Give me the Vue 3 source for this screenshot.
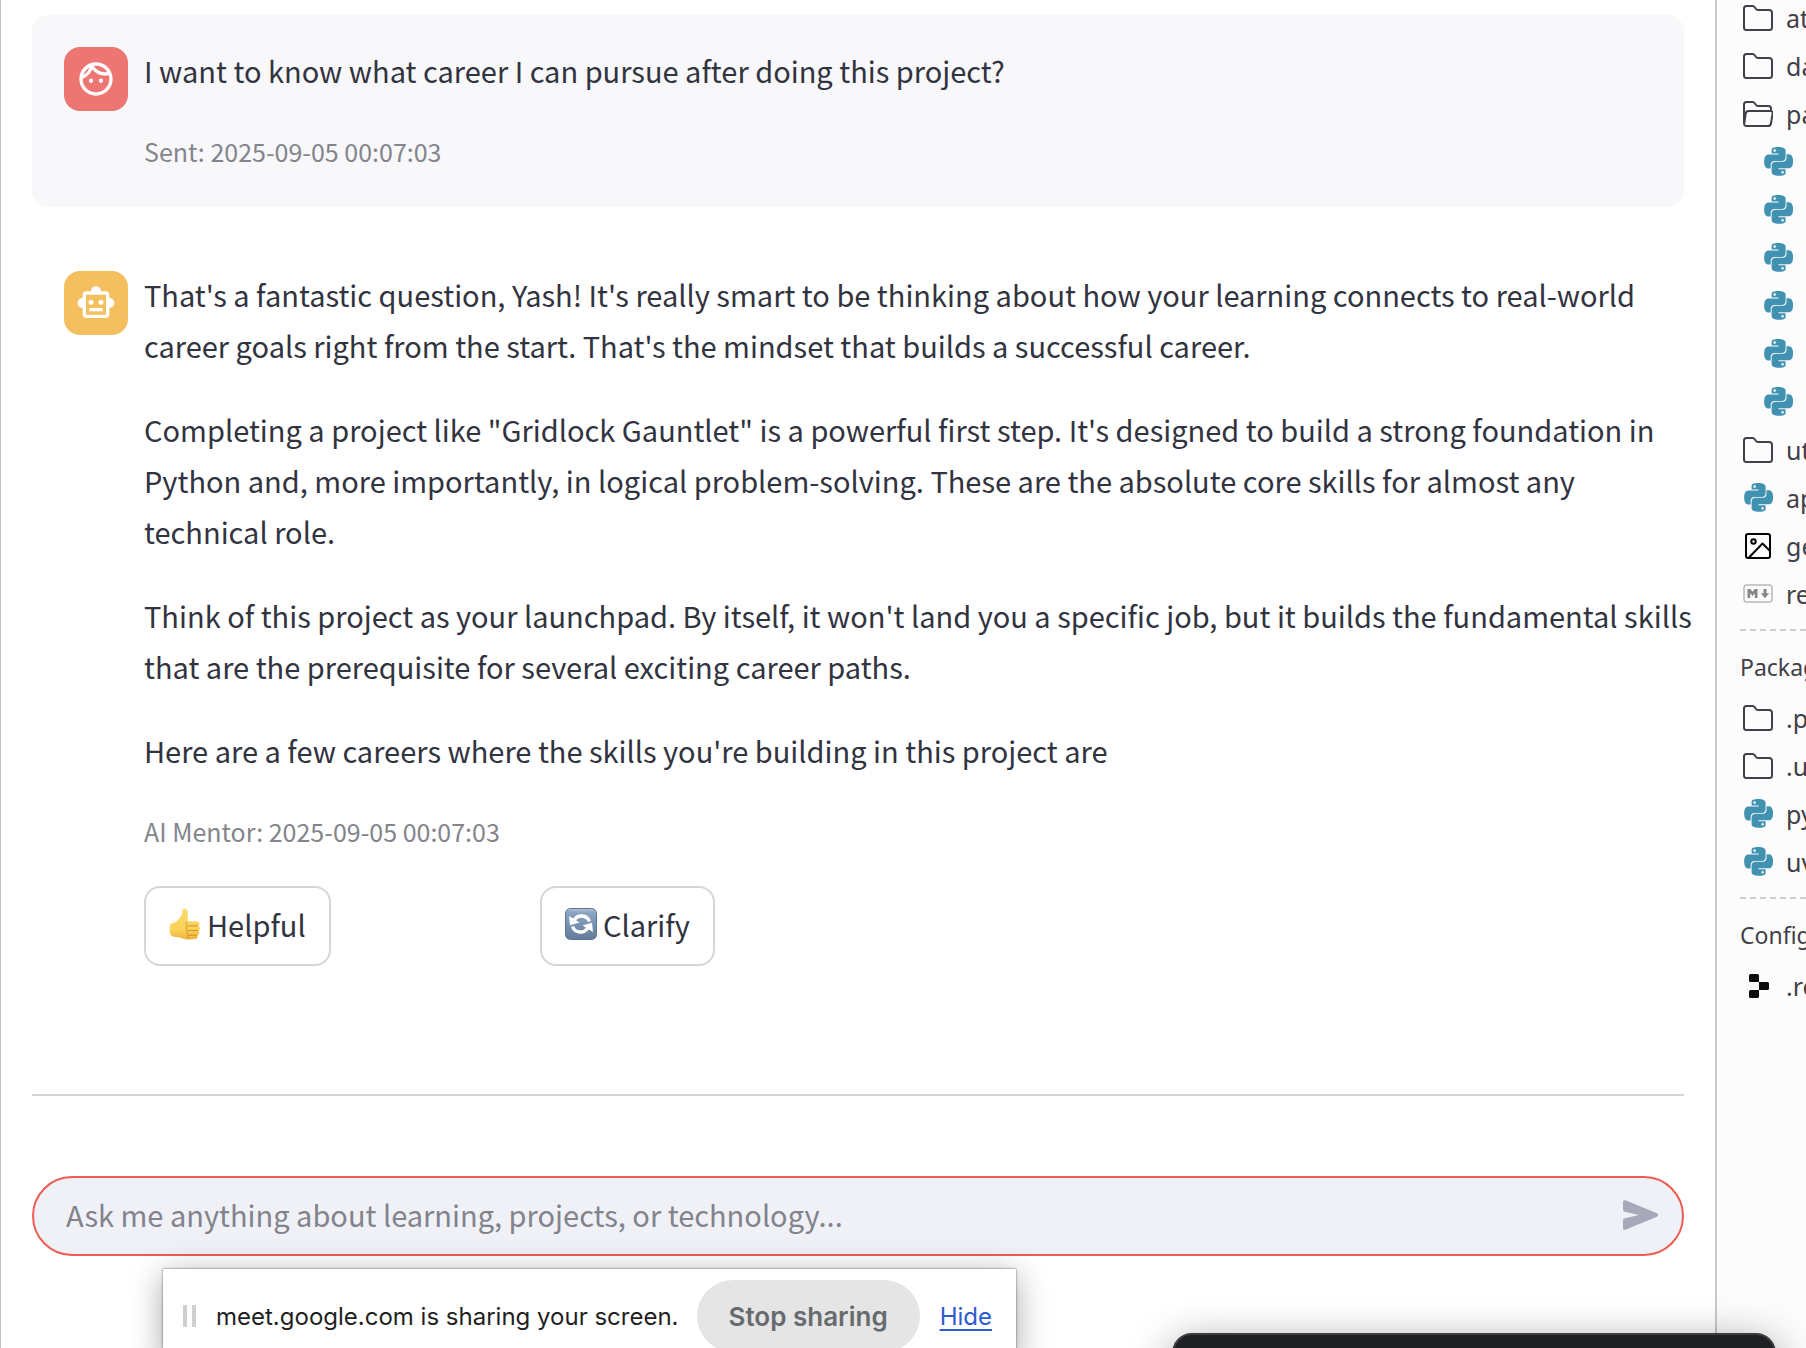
<script setup>
const paragraphs = [
  "That's a fantastic question, Yash! It's really smart to be thinking about how your learning connects to real-world career goals right from the start. That's the mindset that builds a successful career.",
  "Completing a project like \"Gridlock Gauntlet\" is a powerful first step. It's designed to build a strong foundation in Python and, more importantly, in logical problem-solving. These are the absolute core skills for almost any technical role.",
  "Think of this project as your launchpad. By itself, it won't land you a specific job, but it builds the fundamental skills that are the prerequisite for several exciting career paths.",
  "Here are a few careers where the skills you're building in this project are",
]

const groups = [
  {
    title: '',
    rows: [
      { icon: 'folder', label: 'at' },
      { icon: 'folder', label: 'da' },
      { icon: 'open', label: 'pa' },
      { icon: 'python', nested: true },
      { icon: 'python', nested: true },
      { icon: 'python', nested: true },
      { icon: 'python', nested: true },
      { icon: 'python', nested: true },
      { icon: 'python', nested: true },
      { icon: 'folder', label: 'ut' },
      { icon: 'python', label: 'ap' },
      { icon: 'image', label: 'ge' },
      { icon: 'markdown', label: 're' },
    ],
  },
  {
    title: 'Packag',
    rows: [
      { icon: 'folder', label: '.p' },
      { icon: 'folder', label: '.u' },
      { icon: 'python', label: 'py' },
      { icon: 'python', label: 'uv' },
    ],
  },
  { title: 'Config', rows: [{ icon: 'replit', label: '.re' }] },
]
</script>

<template>
  <div class="page">
    <main class="chat">
      <article class="message user">
        <div class="avatar red">
          <svg viewBox="0 0 24 24" aria-hidden="true"><path d="M10.25 13c0 .69-.56 1.25-1.25 1.25S7.75 13.69 7.75 13s.56-1.25 1.25-1.25 1.25.56 1.25 1.25zM15 11.75c-.69 0-1.25.56-1.25 1.25s.56 1.25 1.25 1.25 1.25-.56 1.25-1.25-.56-1.25-1.25-1.25zm7 .25c0 5.52-4.48 10-10 10S2 17.52 2 12 6.48 2 12 2s10 4.48 10 10zM10.66 4.12C12.06 6.44 14.6 8 17.5 8c.46 0 .91-.05 1.34-.12C17.44 5.56 14.9 4 12 4c-.46 0-.91.05-1.34.12zM4.42 9.47c1.71-.97 3.03-2.55 3.66-4.44C6.37 6 5.05 7.58 4.42 9.47zM20 12c0-.78-.12-1.53-.33-2.24-.7.15-1.42.24-2.17.24-3.13 0-5.92-1.44-7.76-3.69C8.69 8.87 6.6 10.88 4 11.86c.01.04 0 .09 0 .14 0 4.42 3.58 8 8 8s8-3.58 8-8z"/></svg>
        </div>
        <div class="body">
          <p>I want to know what career I can pursue after doing this project?</p>
          <p class="caption">Sent: 2025-09-05 00:07:03</p>
        </div>
      </article>

      <article class="message">
        <div class="avatar amber">
          <svg viewBox="0 0 24 24" aria-hidden="true"><path d="M20 9V7c0-1.1-.9-2-2-2h-3c0-1.66-1.34-3-3-3S9 3.34 9 5H6c-1.1 0-2 .9-2 2v2c-1.66 0-3 1.34-3 3s1.34 3 3 3v4c0 1.1.9 2 2 2h12c1.1 0 2-.9 2-2v-4c1.66 0 3-1.34 3-3s-1.34-3-3-3zm-2 10H6V7h12v12zm-9-6c-.83 0-1.5-.67-1.5-1.5S8.17 10 9 10s1.5.67 1.5 1.5S9.83 13 9 13zm7.5-1.5c0 .83-.67 1.5-1.5 1.5s-1.5-.67-1.5-1.5.67-1.5 1.5-1.5 1.5.67 1.5 1.5zM8 15h8v2H8v-2z"/></svg>
        </div>
        <div class="body">
          <p v-for="text in paragraphs" :key="text">{{ text }}</p>
          <p class="caption">AI Mentor: 2025-09-05 00:07:03</p>
          <div class="actions">
            <button type="button" class="action">
              <svg viewBox="0 0 32 32" aria-hidden="true">
                <defs>
                  <linearGradient id="thumb" x1="0" y1="0" x2="0" y2="1">
                    <stop offset="0" stop-color="#fbdb70" /><stop offset="0.7" stop-color="#fbd056" /><stop offset="1" stop-color="#eeb23c" />
                  </linearGradient>
                </defs>
                <path fill="url(#thumb)" d="M14 1.200C15.500-.2 18 .8 18.600 3.200C19.300 6.400 18.700 10 18.300 13.200H27.500C30.600 13.400 31.300 16.800 29.400 18C31.600 19 31.400 22 29.400 22.800C30.900 24 30.300 26.600 28.500 27.200C29.300 29 28.200 30.800 26 31.100C22.500 31.600 18.500 31.700 15.500 31C13 30.400 11.500 29.600 9 29.200C6.300 28.900 3.500 29 2 27.500C.3 24.600.2 19 1.500 16.400C2.600 14.900 5.800 14.800 7.600 13.200C10 11 12.400 8.400 13.200 5.600C13.600 4.100 13.100 2.100 14 1.200z" />
                <path fill="none" stroke="#cf9027" stroke-width="1" stroke-linecap="round" d="M20 17.800H28.500M19.500 22.600H28.500M20 27.200H27.500M18.300 13.400C16.400 14.400 16.600 17 18.500 17.800C16.700 18.800 16.900 21.600 18.800 22.400C17.300 23.600 17.500 26.200 19.500 27C18.500 28.400 19 30 20.200 30.800" />
              </svg>
              <span>Helpful</span>
            </button>
            <button type="button" class="action">
              <svg viewBox="0 0 32 32" aria-hidden="true">
                <defs>
                  <linearGradient id="tile" x1="0" y1="0" x2="0" y2="1">
                    <stop offset="0" stop-color="#b3c6da" /><stop offset="0.12" stop-color="#8ba5c3" /><stop offset="1" stop-color="#627b98" />
                  </linearGradient>
                </defs>
                <rect x="0.500" y="0.500" width="31" height="31" rx="5" fill="url(#tile)" stroke="#5d7690" />
                <g fill="none" stroke="#fff" stroke-width="3.400">
                  <path d="M9 12.500A8.500 8.500 0 0 1 24.500 13.500" />
                  <path d="M23 19.500A8.500 8.500 0 0 1 7.500 18.500" />
                </g>
                <path fill="#fff" d="M4 8 5 17.200 14.500 14.600zM28 24 27 14.800 17.500 17.400z" />
              </svg>
              <span>Clarify</span>
            </button>
          </div>
        </div>
      </article>

      <hr />

      <form class="composer" @submit.prevent>
        <input type="text" aria-label="Message" placeholder="Ask me anything about learning, projects, or technology..." />
        <button type="submit" aria-label="Send">
          <svg viewBox="0 0 36 30" aria-hidden="true"><path d="M2.400.3 34 13.200q2.200 1.800 0 3.600L2.400 29.700Q0 30.300 0 28.200V20.500Q0 18.800 1.800 18.300L16 15 1.800 11.700Q0 11.200 0 9.500V1.800Q0-.3 2.400.3z" /></svg>
        </button>
      </form>
    </main>

    <aside class="files">
      <section v-for="group in groups" :key="group.title" class="group">
        <h2 v-if="group.title">{{ group.title }}</h2>
        <ul>
          <li v-for="(row, i) in group.rows" :key="i" :class="{ nested: row.nested }">
            <svg v-if="row.icon === 'folder'" class="line" viewBox="0 0 30 30" aria-hidden="true"><path d="M1 5.500Q1 3 3.500 3H9.500Q11 3 11.800 4.200L13 6Q13.600 7 15 7H26Q29 7 29 10V24.500Q29 27 26.500 27H3.500Q1 27 1 24.500z" /></svg>
            <svg v-else-if="row.icon === 'open'" class="line" viewBox="0 0 30 30" aria-hidden="true"><path d="M1 24.500V5.500Q1 3 3.500 3H9.500Q11 3 11.800 4.200L13 6Q13.600 7 15 7H25.500Q28 7 28 9.500V12M5.500 12H27.500Q30 12 29.600 14.500L28 24.500Q27.600 27 25 27H3.500Q1 27 1.300 24.500L2.700 14.500Q3 12 5.500 12z" /></svg>
            <svg v-else-if="row.icon === 'python'" class="python" viewBox="-1 0 25 25" aria-hidden="true"><path d="M14.25.18l.9.2.73.26.59.3.45.32.34.34.25.34.16.33.1.3.04.26.02.2-.01.13V8.5l-.05.63-.13.55-.21.46-.26.38-.3.31-.33.25-.35.19-.35.14-.33.1-.3.07-.26.04-.21.02H8.77l-.69.05-.59.14-.5.22-.41.27-.33.32-.27.35-.2.36-.15.37-.1.35-.07.32-.04.27-.02.21v3.06H3.17l-.21-.03-.28-.07-.32-.12-.35-.18-.36-.26-.36-.36-.35-.46-.32-.59-.28-.73-.21-.88-.14-1.05-.05-1.23.06-1.22.16-1.04.24-.87.32-.71.36-.57.4-.44.42-.33.42-.24.4-.16.36-.1.32-.05.24-.01h.16l.06.01h8.16v-.83H6.18l-.01-2.75-.02-.37.05-.34.11-.31.17-.28.25-.26.31-.23.38-.2.44-.18.51-.15.58-.12.64-.1.71-.06.77-.04.84-.02 1.27.05zm-6.3 1.98l-.23.33-.08.41.08.41.23.34.33.22.41.09.41-.09.33-.22.23-.34.08-.41-.08-.41-.23-.33-.33-.22-.41-.09-.41.09zm13.09 3.95l.28.06.32.12.35.18.36.27.36.35.35.47.32.59.28.73.21.88.14 1.04.05 1.23-.06 1.23-.16 1.04-.24.86-.32.71-.36.57-.4.45-.42.33-.42.24-.4.16-.36.09-.32.05-.24.02-.16-.01h-8.22v.82h5.84l.01 2.76.02.36-.05.34-.11.31-.17.29-.25.25-.31.24-.38.2-.44.17-.51.15-.58.13-.64.09-.71.07-.77.04-.84.01-1.27-.04-1.07-.14-.9-.2-.73-.25-.59-.3-.45-.33-.34-.34-.25-.34-.16-.33-.1-.3-.04-.25-.02-.2.01-.13v-5.34l.05-.64.13-.54.21-.46.26-.38.3-.32.33-.24.35-.2.35-.14.33-.1.3-.06.26-.04.21-.02.13-.01h5.84l.69-.05.59-.14.5-.21.41-.28.33-.32.27-.35.2-.36.15-.36.1-.35.07-.32.04-.28.02-.21V6.07h2.09l.14.01zm-6.47 14.25l-.23.33-.08.41.08.41.23.33.33.23.41.08.41-.08.33-.23.23-.33.08-.41-.08-.41-.23-.33-.33-.23-.41-.08-.41.08z" /></svg>
            <svg v-else-if="row.icon === 'image'" class="line dark" viewBox="0 0 30 30" aria-hidden="true"><rect x="3" y="3" width="24" height="24" rx="2" /><circle cx="10.500" cy="10.500" r="2.200" /><path d="M6 26.500 19.500 12.500 27 20" /></svg>
            <svg v-else-if="row.icon === 'markdown'" class="markdown" viewBox="0 0 30 30" aria-hidden="true"><rect x="1" y="6" width="28" height="17" rx="2" /><path d="M4.500 19V10H7.200L9.500 12.800 11.800 10H14.500V19H11.800V14.200L9.500 17 7.200 14.200V19zM20.500 10H23.500V14.200H26.200L22 19.200 17.800 14.200H20.500z" /></svg>
            <svg v-else viewBox="0 0 30 30" aria-hidden="true"><path d="M7.500 3H14.500Q16 3 16 4.500V11H7.500Q6 11 6 9.500V4.500Q6 3 7.500 3zM16 11H24.500Q26 11 26 12.500V17.500Q26 19 24.500 19H16zM7.500 19H16V25.500Q16 27 14.500 27H7.500Q6 27 6 25.500V20.500Q6 19 7.500 19z" /></svg>
            <span v-if="row.label">{{ row.label }}</span>
          </li>
        </ul>
      </section>
    </aside>

    <div class="share">
      <span class="grip" aria-hidden="true"></span>
      <span class="notice">meet.google.com is sharing your screen.</span>
      <button type="button">Stop sharing</button>
      <a href="#">Hide</a>
    </div>
    <div class="dock"></div>
  </div>
</template>

<style>
body {
  margin: 0;
}
</style>

<style scoped>
.page {
  position: relative;
  display: flex;
  min-height: 100vh;
  overflow: hidden;
  background: #fff;
  color: #31333f;
  font-family: "Noto Sans CJK SC", sans-serif;
  font-size: 29px;
  line-height: 51px;
}
.page * {
  box-sizing: border-box;
}
.chat {
  flex: 1;
  min-width: 0;
  padding: 15px 31px 0;
  border-left: 1px solid #c4c4c6;
}
.message {
  display: flex;
  gap: 16px;
  padding: 30px 0 34px 32px;
  border-radius: 16px;
}
.message + .message {
  margin-top: 32px;
}
.user {
  background: #f8f8fb;
}
.avatar {
  display: flex;
  flex: none;
  align-items: center;
  justify-content: center;
  width: 64px;
  height: 64px;
  margin-top: 2px;
  border-radius: 16px;
}
.avatar svg {
  width: 40px;
  height: 40px;
  fill: #fff;
}
.red {
  background: #ed7572;
}
.amber {
  background: #f4bf5e;
}
.body {
  flex: 1;
  min-width: 0;
  margin-right: -16px;
}
.body p {
  margin: 0 0 33px;
}
.body .caption {
  margin: 0;
  color: #83848c;
  font-size: 25px;
  line-height: 44px;
}
.actions {
  display: grid;
  grid-template-columns: repeat(4, 1fr);
  gap: 28px;
  justify-items: start;
  margin-top: 33px;
}
.action {
  display: flex;
  align-items: center;
  gap: 6px;
  height: 80px;
  padding: 0 23px 4px;
  border: 2px solid #d6d6d9;
  border-radius: 16px;
  background: #fff;
  color: inherit;
  font: inherit;
}
.action svg {
  width: 32px;
  height: 32px;
}
hr {
  height: 2px;
  margin: 94px 0 80px;
  border: 0;
  background: #d6d6d9;
}
.composer {
  display: flex;
  align-items: center;
  height: 80px;
  padding: 0 23px 2px 32px;
  border: 2px solid #ef5b54;
  border-radius: 40px;
  background: #f0f1f6;
}
.composer input {
  flex: 1;
  min-width: 0;
  height: 56px;
  padding: 0 0 2px;
  border: 0;
  outline: 0;
  background: none;
  color: inherit;
  font: inherit;
}
.composer input::placeholder {
  color: #82838c;
  opacity: 1;
}
.composer button {
  display: flex;
  padding: 0;
  border: 0;
  background: none;
}
.composer svg {
  width: 36px;
  height: 30px;
  fill: #a5a9b9;
}
.files {
  flex: none;
  width: 91px;
  padding: 0 0 0 23px;
  overflow: hidden;
  border-left: 2px solid #c9c9cc;
  background: #fcfcfc;
  color: #3f4048;
  font-family: "Noto Sans", sans-serif;
  font-size: 25px;
  line-height: 48px;
  white-space: nowrap;
}
.files ul {
  margin: 0;
  padding: 0;
  list-style: none;
}
.group:first-child ul {
  margin-top: -6px;
}
.group + .group::before {
  content: "";
  display: block;
  height: 2px;
  margin: 11px 0 12px;
  background: repeating-linear-gradient(90deg, #cfcfd1 0 6px, transparent 6px 10px);
}
.files h2 {
  margin: 0 0 3px;
  font-size: 23px;
  font-weight: 400;
  line-height: 48px;
}
.files li {
  display: flex;
  align-items: center;
  gap: 13px;
  height: 48px;
  padding-left: 3px;
}
.files .nested {
  padding-left: 23px;
}
.files svg {
  flex: none;
  width: 30px;
  height: 30px;
  fill: #0a0b0d;
}
.files .line {
  fill: none;
  stroke: #3f4048;
  stroke-width: 2;
  stroke-linejoin: round;
}
.files .dark {
  stroke: #050505;
}
.files .python {
  fill: #4191b1;
}
.files .markdown {
  fill: #868686;
}
.files .markdown rect {
  fill: none;
  stroke: #969696;
  stroke-width: 1;
}
.share {
  position: absolute;
  bottom: -15px;
  left: 163px;
  display: flex;
  align-items: center;
  height: 94px;
  padding: 0 24px 0 20px;
  background: #fff;
  box-shadow: 0 0 2px rgba(0, 0, 0, 0.6), 0 6px 32px rgba(0, 0, 0, 0.35);
  color: #1f1f1f;
  font-family: Inter, sans-serif;
  font-size: 24px;
}
.grip {
  width: 13px;
  height: 22px;
  margin-right: 20px;
  border: solid #cfcfcf;
  border-width: 0 4px;
}
.share button {
  height: 72px;
  margin: 0 20px 0 18px;
  padding: 0 32px;
  border: 0;
  border-radius: 36px;
  background: #e5e5e5;
  color: #676a6e;
  font: 600 26px Inter, sans-serif;
}
.share a {
  color: #2b5bd0;
  text-underline-offset: 4px;
}
.dock {
  position: absolute;
  right: 30px;
  bottom: -40px;
  width: 604px;
  height: 55px;
  border: 2px solid #3b3d3e;
  border-radius: 20px;
  background: #202124;
  box-shadow: 0 12px 44px rgba(0, 0, 0, 0.45);
}
</style>
